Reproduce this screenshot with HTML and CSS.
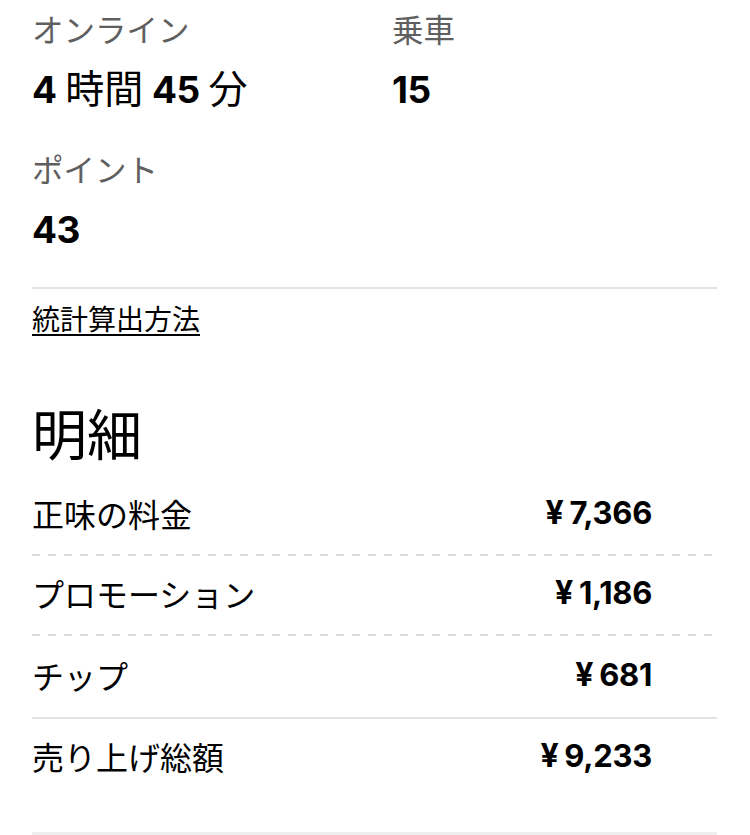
FILE: index.html
```html
<!DOCTYPE html>
<html lang="ja">
<head>
<meta charset="utf-8">
<link rel="stylesheet" href="styles.css">
</head>
<body>
<div class="page">
  <div class="stats">
    <div class="stat">
      <div class="stat-label">オンライン</div>
      <div class="stat-value"><span class="num">4</span> 時間 <span class="num">45</span> 分</div>
    </div>
    <div class="stat">
      <div class="stat-label">乗車</div>
      <div class="stat-value"><span class="num">15</span></div>
    </div>
    <div class="stat">
      <div class="stat-label">ポイント</div>
      <div class="stat-value"><span class="num">43</span></div>
    </div>
  </div>
  <div class="divider"></div>
  <a class="method-link" href="#">統計算出方法</a>
  <h2 class="section-title">明細</h2>
  <div class="breakdown">
    <div class="row dashed">
      <span class="row-label">正味の料金</span>
      <span class="amount"><span class="yen">¥</span>7,366</span>
    </div>
    <div class="row dashed">
      <span class="row-label">プロモーション</span>
      <span class="amount"><span class="yen">¥</span>1,186</span>
    </div>
    <div class="row solid tip">
      <span class="row-label">チップ</span>
      <span class="amount"><span class="yen">¥</span>681</span>
    </div>
    <div class="row total">
      <span class="row-label">売り上げ総額</span>
      <span class="amount"><span class="yen">¥</span>9,233</span>
    </div>
  </div>
</div>
</body>
</html>
```
FILE: styles.css
```css
html, body {
  margin: 0;
  padding: 0;
  background: #ffffff;
}

body {
  font-family: "Noto Sans CJK JP", sans-serif;
  color: #000000;
}

.page {
  width: 685px;
  padding: 8px 0 0 32px;
}

.stats {
  display: grid;
  grid-template-columns: 360px 1fr;
  row-gap: 30px;
}

.stat-label {
  font-size: 31.5px;
  line-height: 40px;
  color: #5f5f5f;
  font-weight: 400;
}

.stat-value {
  margin-top: 10px;
  font-size: 39px;
  line-height: 56px;
  font-weight: 400;
}

.num {
  font-family: Inter, "Noto Sans CJK JP", sans-serif;
  font-weight: 700;
  font-size: 37px;
  letter-spacing: -0.5px;
}

.divider {
  height: 2px;
  background: #e3e3e3;
  margin-top: 29px;
}

.method-link {
  display: inline-block;
  margin-top: 9px;
  font-size: 28px;
  line-height: 40px;
  color: #000000;
  text-decoration: underline;
  text-decoration-thickness: 2px;
  text-underline-offset: 4px;
}

.section-title {
  margin: 61px 0 0 0;
  font-size: 55px;
  line-height: 64px;
  font-weight: 400;
}

.breakdown {
  margin-top: 13px;
}

.row {
  display: flex;
  justify-content: space-between;
  align-items: center;
  height: 74px;
  padding-bottom: 4px;
  padding-right: 65px;
}

.row.dashed {
  padding-bottom: 6px;
  background-image: linear-gradient(to right, #dddddd 50%, transparent 50%);
  background-size: 16px 2px;
  background-repeat: repeat-x;
  background-position: left bottom;
}

.row.solid {
  border-bottom: 2px solid #e3e3e3;
}

.row.tip {
  height: 77px;
}

.row.total {
  height: 74px;
  padding-bottom: 39px;
  border-bottom: 5px solid #eeeeee;
}

.row-label {
  font-size: 32px;
  line-height: 40px;
}

.amount {
  font-family: Inter, "Noto Sans CJK JP", sans-serif;
  font-weight: 700;
  font-size: 31px;
  line-height: 40px;
  letter-spacing: -0.3px;
}

.yen {
  margin-right: 6px;
  font-size: 32px;
}
```
